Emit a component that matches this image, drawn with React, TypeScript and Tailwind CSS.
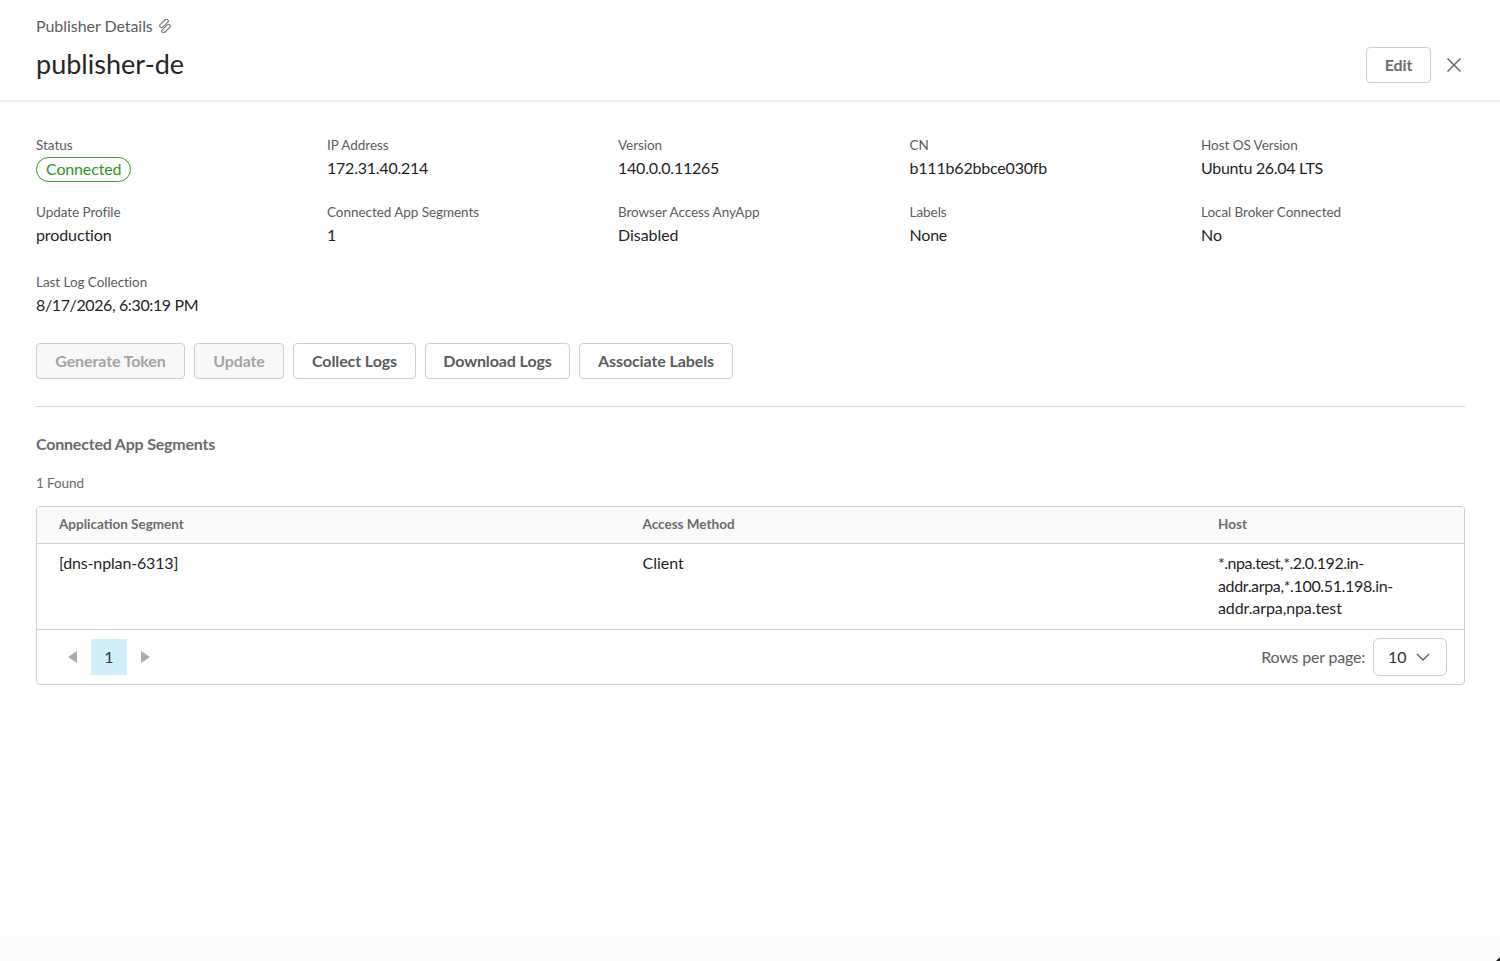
import React from 'react';

const info = [
  { label: 'IP Address', value: '172.31.40.214', tracking: 'tracking-[-0.23px]' },
  { label: 'Version', value: '140.0.0.11265', tracking: 'tracking-[-0.23px]' },
  { label: 'CN', value: 'b111b62bbce030fb', tracking: 'tracking-[-0.19px]' },
  { label: 'Host OS Version', value: 'Ubuntu 26.04 LTS', tracking: 'tracking-[-0.31px]' },
];

const info2 = [
  { label: 'Update Profile', value: 'production', tracking: 'tracking-[-0.1px]' },
  { label: 'Connected App Segments', value: '1', tracking: 'tracking-normal' },
  { label: 'Browser Access AnyApp', value: 'Disabled', tracking: 'tracking-[-0.05px]' },
  { label: 'Labels', value: 'None', tracking: 'tracking-[-0.2px]' },
  { label: 'Local Broker Connected', value: 'No', tracking: 'tracking-normal' },
];

const Field = ({ label, value, tracking }: { label: string; value: string; tracking: string }) => (
  <div>
    <p className="text-[13.5px] leading-[18px] tracking-[-0.05px] text-[#5c5c5c]">{label}</p>
    <p className={`mt-[2px] text-[16px] leading-[24px] text-[#1f1f1f] ${tracking}`}>{value}</p>
  </div>
);

const ActionButton = ({ children, disabled, width }: { children: string; disabled?: boolean; width: string }) => (
  <button
    className={
      disabled
        ? `h-[36px] rounded-[4px] border border-[#cfcfcf] bg-[#f8f8f8] text-[16px] font-bold tracking-[-0.1px] text-[#a3a3a3] ${width}`
        : `h-[36px] rounded-[4px] border border-[#cfcfcf] bg-white text-[16px] font-bold tracking-[-0.1px] text-[#5c5c5c] ${width}`
    }
  >
    {children}
  </button>
);

export default function App() {
  return (
    <div className="relative h-[961px] w-[1500px] overflow-hidden bg-gradient-to-b from-white from-[95%] to-[#fbfbfb] font-['Lato','Noto_Sans',sans-serif]">
      <header className="flex h-[101px] items-center justify-between border-b border-[#ececec] bg-white pl-[36px] pr-[38px] shadow-[0_1px_3px_rgba(0,0,0,0.08)]">
        <div className="-mt-[5px]">
          <div className="flex items-center gap-[5px] text-[16px] leading-[24px] tracking-[-0.05px] text-[#5c5c5c]">
            Publisher Details
            <svg width="14" height="14" viewBox="0 0 14 14" fill="none" stroke="#757575" strokeWidth="1.1">
              <rect x="0.8" y="2.6" width="10.5" height="3.6" rx="1.6" transform="rotate(-45 6 4.4)" />
              <rect x="2.7" y="7.8" width="10.5" height="3.6" rx="1.6" transform="rotate(-45 8 9.6)" />
            </svg>
          </div>
          <h1 className="mt-[8px] text-[27px] leading-[36px] tracking-[0.02px] text-[#262626]">publisher-de</h1>
        </div>
        <div className="mt-[29px] flex items-center gap-[15px]">
          <button className="h-[36px] w-[65px] rounded-[4px] border border-[#cfcfcf] text-[16px] font-bold tracking-[-0.1px] text-[#6b6b6b]">Edit</button>
          <svg width="16" height="16" viewBox="0 0 16 16" fill="none" stroke="#5c5c5c" strokeWidth="1.4">
            <path d="M1.5 1.5 L14.5 14.5 M14.5 1.5 L1.5 14.5" />
          </svg>
        </div>
      </header>

      <main className="pl-[36px] pr-[35px] pt-[35px]">
        <div className="grid grid-cols-[291px_291px_291.5px_291.5px_1fr]">
          <div>
            <p className="text-[13.5px] leading-[18px] text-[#5c5c5c]">Status</p>
            <span className="mt-[3px] inline-flex h-[25px] items-center rounded-full border border-[#3d9a2f] px-[9px] pb-[1px] text-[16px] tracking-[-0.15px] text-[#2f9423]">Connected</span>
          </div>
          {info.map((f) => (
            <Field key={f.label} label={f.label} value={f.value} tracking={f.tracking} />
          ))}
        </div>

        <div className="mt-[21px] grid grid-cols-[291px_291px_291.5px_291.5px_1fr]">
          {info2.map((f) => (
            <Field key={f.label} label={f.label} value={f.value} tracking={f.tracking} />
          ))}
        </div>

        <div className="mt-[26px]">
          <Field label="Last Log Collection" value="8/17/2026, 6:30:19 PM" tracking="tracking-[-0.38px]" />
        </div>

        <div className="mt-[26px] flex gap-[9px]">
          <ActionButton disabled width="w-[149px]">Generate Token</ActionButton>
          <ActionButton disabled width="w-[90px]">Update</ActionButton>
          <ActionButton width="w-[123px]">Collect Logs</ActionButton>
          <ActionButton width="w-[145px]">Download Logs</ActionButton>
          <ActionButton width="w-[154px]">Associate Labels</ActionButton>
        </div>

        <div className="mt-[27px] border-t border-[#d4d4d4]" />

        <h2 className="mt-[25px] text-[16px] leading-[24px] font-bold tracking-[-0.2px] text-[#6b6b6b]">Connected App Segments</h2>
        <p className="mt-[18px] text-[13.5px] leading-[18px] tracking-[-0.1px] text-[#6b6b6b]">1 Found</p>

        <div className="mt-[14px] rounded-[4px] border border-[#cfcfcf]">
          <div className="grid h-[37px] grid-cols-[583.5px_575.5px_1fr] items-center border-b border-[#cfcfcf] bg-[#fafafa] pb-[2px] pl-[22px] text-[13.5px] font-bold text-[#6b6b6b]">
            <span>Application Segment</span>
            <span>Access Method</span>
            <span>Host</span>
          </div>
          <div className="grid h-[86px] grid-cols-[583.5px_575.5px_1fr] border-b border-[#cfcfcf] pl-[22px] pt-[8px] text-[16px] leading-[22.5px] text-[#1f1f1f]">
            <span className="tracking-[-0.15px]">[dns-nplan-6313]</span>
            <span>Client</span>
            <span className="w-[200px]">
              <span className="tracking-[-0.5px]">*.npa.test,*.2.0.192.in-</span>
              <span className="tracking-[-0.35px]">addr.arpa,*.100.51.198.in-</span>
              <span className="tracking-[-0.1px]">addr.arpa,npa.test</span>
            </span>
          </div>
          <div className="flex h-[54px] items-center justify-between pl-[31px] pr-[17px]">
            <div className="flex items-center">
              <svg width="9" height="12" viewBox="0 0 9 12" fill="#ababab"><path d="M9 0 V12 L0 6 Z" /></svg>
              <span className="ml-[14px] flex h-[36px] w-[36px] items-center justify-center bg-[#cff1f7] text-[16px] text-[#333333]">1</span>
              <svg className="ml-[14px]" width="9" height="12" viewBox="0 0 9 12" fill="#ababab"><path d="M0 0 V12 L9 6 Z" /></svg>
            </div>
            <div className="flex items-center gap-[8px]">
              <span className="text-[16px] tracking-[-0.2px] text-[#5c5c5c]">Rows per page:</span>
              <div className="flex h-[38px] w-[74px] items-center rounded-[6px] border border-[#cfcfcf] pl-[14px] text-[16px] text-[#333333]">
                10
                <svg className="ml-[9px]" width="14" height="8" viewBox="0 0 14 8" fill="none" stroke="#5c5c5c" strokeWidth="1.3"><path d="M1 1 L7 7 L13 1" /></svg>
              </div>
            </div>
          </div>
        </div>
      </main>

      <svg className="absolute bottom-0 right-0" width="4" height="4" viewBox="0 0 4 4" fill="#222222"><path d="M4 0 V4 H0 Z" /></svg>
    </div>
  );
}
